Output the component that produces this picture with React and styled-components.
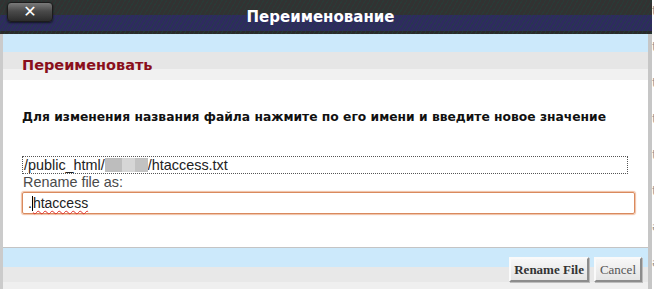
import styled, { createGlobalStyle } from 'styled-components'

const Global = createGlobalStyle`
  html, body { margin: 0; padding: 0; background: #fff; overflow: hidden; }
  #root { width: 654px; height: 289px; }
`;

const Page = styled.div`
  display: flex;
  width: 654px;
  height: 289px;
  overflow: hidden;
`;

const Dialog = styled.div`
  width: 652px;
  flex: none;
  display: flex;
  flex-direction: column;
  background: #fff;
`;

const TitleBar = styled.div`
  height: 34px;
  display: flex;
  align-items: flex-start;
  padding-left: 7px;
  box-sizing: border-box;
  background:
    repeating-linear-gradient(120deg, rgba(30, 70, 60, 0.45) 0 1px, transparent 1px 4px),
    linear-gradient(#323232 0 15px, #2e2b5f 15px 31px, #2a2a2a 31px);
`;

const CloseButton = styled.button`
  width: 46px;
  height: 20px;
  margin-top: 2px;
  border: 1px solid #1c1c1c;
  border-radius: 4px;
  background: linear-gradient(#7a7a7a, #4a4a4a 45%, #2c2c2c);
  box-shadow: 0 1px 2px rgba(0, 0, 0, 0.6);
  color: #fff;
  font: bold 16px/16px "DejaVu Sans", sans-serif;
  padding: 0;
  display: flex;
  align-items: center;
  justify-content: center;
`;

const Title = styled.div`
  flex: 1;
  padding-right: 64px;
  text-align: center;
  color: #fff;
  font: bold 15px/34px "DejaVu Sans", Verdana, sans-serif;
`;

const Body = styled.div`
  flex: 1;
  display: flex;
  flex-direction: column;
  border-left: 3px solid #cbcbcb;
  border-right: 4px solid #c6c6c6;
`;

const Band = styled.div`
  height: ${p => p.$h}px;
  background: #cce9fb;
`;

const SectionHead = styled.div`
  height: 28px;
  padding-left: 19px;
  background: linear-gradient(#e6e6e6 0 17px, #f1f1f1 17px);
  color: #8a0f1c;
  font: bold 14.5px/26px "DejaVu Sans", Verdana, sans-serif;
`;

const Content = styled.div`
  height: 168px;
  box-sizing: border-box;
  padding: 29px 14px 0 19px;
  background: #fff;
  border-bottom: 1px solid #c4c4c4;
`;

const Description = styled.p`
  margin: 0 0 31px;
  color: #111;
  font: bold 12.3px/16px "DejaVu Sans", Verdana, sans-serif;
  white-space: nowrap;
`;

const PathBox = styled.div`
  width: 606px;
  height: 18px;
  box-sizing: border-box;
  border: 1px dotted #555;
  padding-left: 1px;
  color: #222;
  font: 14.4px/16px "Liberation Sans", Arial, sans-serif;
  white-space: nowrap;
`;

const Redacted = styled.span`
  display: inline-block;
  width: 43px;
  height: 14px;
  vertical-align: -2px;
  background: linear-gradient(90deg, #bdbdbd 0 40%, #d6d6d6 40% 70%, #c2c2c2 70%);
  filter: blur(0.6px);
`;

const Label = styled.div`
  margin: 0 0 1px 1px;
  color: #4a4a4a;
  font: 14.4px/17px "Liberation Sans", Arial, sans-serif;
`;

const Field = styled.div`
  width: 613px;
  height: 22px;
  box-sizing: border-box;
  border: 1px solid #d98a5e;
  border-radius: 2px;
  box-shadow: 0 0 1px 1px rgba(233, 164, 124, 0.7);
  padding-left: 5px;
  color: #222;
  font: 14px/20px "Liberation Sans", Arial, sans-serif;
`;

const Caret = styled.span`
  display: inline-block;
  width: 1px;
  height: 15px;
  background: #000;
  vertical-align: -3px;
`;

const Misspelled = styled.span`
  text-decoration: underline wavy #e0302a;
  text-decoration-thickness: 1px;
  text-underline-offset: 2px;
`;

const Footer = styled.div`
  flex: 1;
  display: flex;
  justify-content: flex-end;
  align-items: flex-start;
  gap: 5px;
  padding: 9px 6px 0 0;
  background: linear-gradient(#cce9fb 0 19px, #e8e8e8 19px 34px, #efefef 34px);
`;

const Button = styled.button`
  height: 25px;
  padding: 0 ${p => (p.$primary ? 3 : 4)}px;
  background: linear-gradient(#f7f7f7, #e4e4e4);
  border: 2px solid;
  border-color: #fafafa #8c8c8c #8c8c8c #fafafa;
  box-shadow: 1px 1px 0 #bcbcbc;
  color: ${p => (p.$primary ? '#333' : '#555')};
  font: ${p => (p.$primary ? 'bold' : 'normal')} 13px/19px "Liberation Serif", "Times New Roman", serif;
`;

const Backdrop = styled.div`
  width: 2px;
  flex: none;
  display: flex;
  flex-direction: column;
  gap: 22px;
  padding-top: 4px;
  overflow: hidden;
  color: #999;
  font: 13px/14px "DejaVu Sans", sans-serif;
`;

const ghostLetters = ['t', 't', 't', 't', 't', 't', 'ә', 'ә', 'ә'];

export default function App() {
  return (
    <Page>
      <Global />
      <Dialog>
        <TitleBar>
          <CloseButton>✕</CloseButton>
          <Title>Переименование</Title>
        </TitleBar>
        <Body>
          <Band $h={18} />
          <SectionHead>Переименовать</SectionHead>
          <Content>
            <Description>
              Для изменения названия файла нажмите по его имени и введите новое значение
            </Description>
            <PathBox>
              /public_html/<Redacted />/htaccess.txt
            </PathBox>
            <Label>Rename file as:</Label>
            <Field>
              .<Caret /><Misspelled>htaccess</Misspelled>
            </Field>
          </Content>
          <Footer>
            <Button $primary>Rename File</Button>
            <Button>Cancel</Button>
          </Footer>
        </Body>
      </Dialog>
      <Backdrop>
        {ghostLetters.map((l, i) => (
          <span key={i}>{l}</span>
        ))}
      </Backdrop>
    </Page>
  )
}
